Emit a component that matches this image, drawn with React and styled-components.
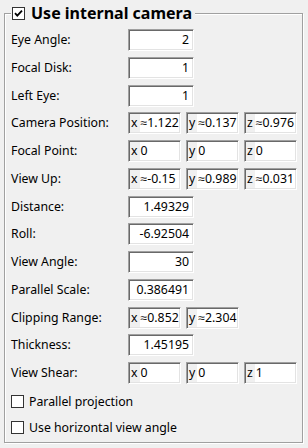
import React from 'react';
import styled, { createGlobalStyle } from 'styled-components';

const Global = createGlobalStyle`
  html, body { margin: 0; padding: 0; background: #f0f0f0; }
  body { font-family: "Noto Sans", "Segoe UI", sans-serif; font-size: 12.3px; color: #000; }
`;

const Page = styled.div`
  width: 308px;
  height: 448px;
  box-sizing: border-box;
  padding: 3px 5px 5px 4px;
  background: #f0f0f0;
`;

const Group = styled.fieldset`
  margin: 0;
  min-width: 0;
  height: 100%;
  box-sizing: border-box;
  border: 1px solid #a0a0a0;
  box-shadow: 1px 1px 0 #fff, inset 1px 1px 0 #fff;
  padding: 6px 4px 4px 6px;
`;

const Legend = styled.legend`
  display: flex;
  align-items: center;
  gap: 6px;
  height: 20px;
  padding: 0 3px 0 1px;
  background: #f0f0f0;
  font-size: 16px;
  font-weight: bold;
  line-height: 20px;
`;

const Box = styled.span`
  box-sizing: border-box;
  width: 13px;
  height: 13px;
  flex: none;
  border: 1px solid #333;
  background: #fff;
  display: inline-flex;
  align-items: center;
  justify-content: center;
`;

const Grid = styled.div`
  display: grid;
  grid-template-columns: 117px auto;
  grid-auto-rows: 22px;
  row-gap: 5.75px;
  align-items: center;
`;

const Label = styled.div`
  line-height: 22px;
  white-space: nowrap;
`;

const FieldRow = styled.div`
  display: flex;
  gap: 5px;
  height: 22px;
`;

const Field = styled.div`
  box-sizing: border-box;
  width: ${p => p.$w}px;
  height: 22px;
  padding: 1px;
  border: 1px solid;
  border-color: #a0a0a0 #fff #fff #a0a0a0;
  box-shadow: inset 1px 1px 0 #696969, inset -1px -1px 0 #e3e3e3;
  background: #fff;
  display: flex;
  align-items: stretch;
  line-height: 18px;
  overflow: hidden;
  white-space: nowrap;
`;

const Prefix = styled.span`
  background: #f0f0f0;
  padding: 0 2px 0 1px;
`;

const Value = styled.span`
  flex: 1;
  padding: ${p => (p.$right ? '0 3px 0 0' : '0 0 0 1px')};
  text-align: ${p => (p.$right ? 'right' : 'left')};
`;

const Checks = styled.div`
  margin-top: 7px;
  display: flex;
  flex-direction: column;
  gap: 6px;
`;

const CheckRow = styled.label`
  display: flex;
  align-items: center;
  gap: 5px;
  height: 20px;
`;

const Tick = () => (
  <svg width="11" height="11" viewBox="0 0 11 11">
    <path d="M2 5.2 L4.3 7.6 L9 2.6" fill="none" stroke="#000" strokeWidth="1.8" />
  </svg>
);

const rows = [
  { label: 'Eye Angle:', single: '2' },
  { label: 'Focal Disk:', single: '1' },
  { label: 'Left Eye:', single: '1' },
  { label: 'Camera Position:', multi: [['x', '≈1.122'], ['y', '≈0.137'], ['z', '≈0.976']] },
  { label: 'Focal Point:', multi: [['x', '0'], ['y', '0'], ['z', '0']] },
  { label: 'View Up:', multi: [['x', '≈-0.15'], ['y', '≈0.989'], ['z', '≈0.031']] },
  { label: 'Distance:', single: '1.49329' },
  { label: 'Roll:', single: '-6.92504' },
  { label: 'View Angle:', single: '30' },
  { label: 'Parallel Scale:', single: '0.386491' },
  { label: 'Clipping Range:', multi: [['x', '≈0.852'], ['y', '≈2.304']] },
  { label: 'Thickness:', single: '1.45195' },
  { label: 'View Shear:', multi: [['x', '0'], ['y', '0'], ['z', '1']] },
];

export default function App() {
  return (
    <Page>
      <Global />
      <Group>
        <Legend>
          <Box><Tick /></Box>
          <span>Use internal camera</span>
        </Legend>
        <Grid>
          {rows.map(r => (
            <React.Fragment key={r.label}>
              <Label>{r.label}</Label>
              <FieldRow>
                {r.single !== undefined ? (
                  <Field $w={66}><Value $right>{r.single}</Value></Field>
                ) : (
                  r.multi.map(([a, v]) => (
                    <Field key={a} $w={53}>
                      <Prefix>{a}</Prefix>
                      <Value>{v}</Value>
                    </Field>
                  ))
                )}
              </FieldRow>
            </React.Fragment>
          ))}
        </Grid>
        <Checks>
          <CheckRow><Box /><span>Parallel projection</span></CheckRow>
          <CheckRow><Box /><span>Use horizontal view angle</span></CheckRow>
        </Checks>
      </Group>
    </Page>
  );
}
